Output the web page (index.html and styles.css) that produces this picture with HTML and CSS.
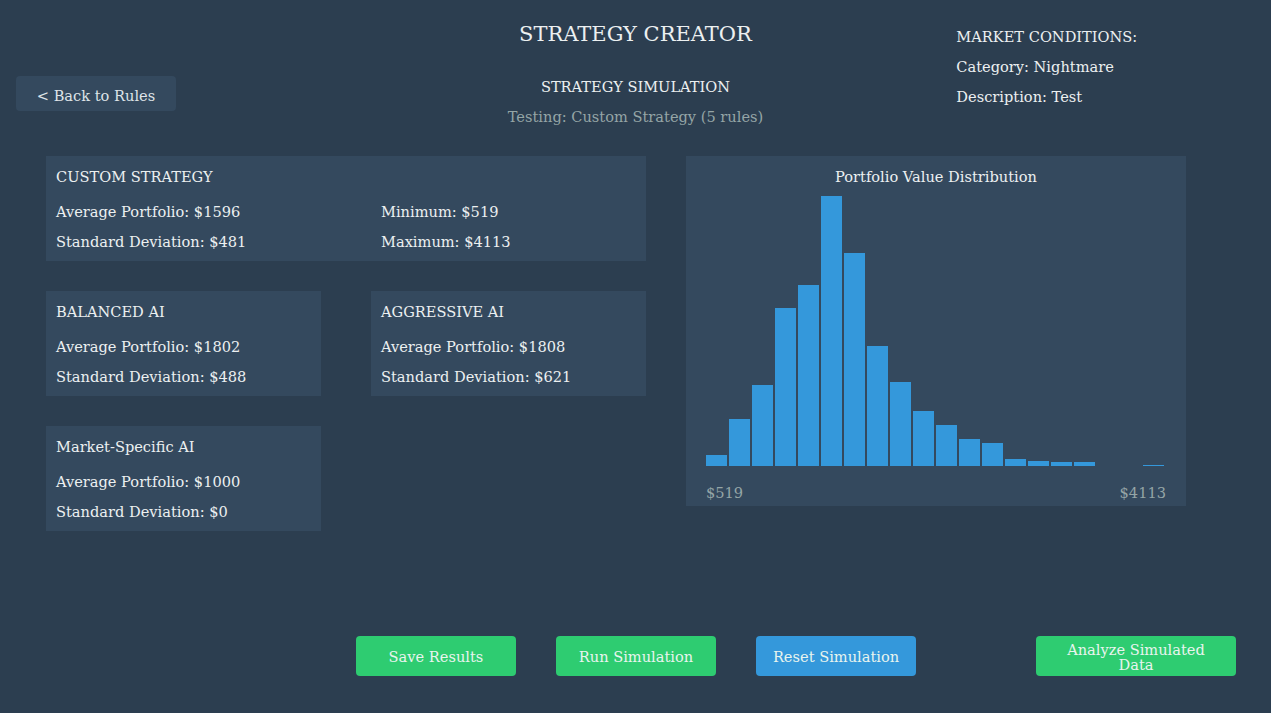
FILE: index.html
```html
<!DOCTYPE html>
<html>
<head>
    <meta name="viewport" content="width=device-width, initial-scale=1.0">
    <link rel="stylesheet" href="styles.css">
</head>

<body>
    <div class="screen">
        <div class="header">
            <div class="header-left">
                <button class="back-btn">&lt; Back to Rules</button>
            </div>
            <div class="header-center">
                <h1 class="title">STRATEGY CREATOR</h1>
                <p class="subtitle">STRATEGY SIMULATION</p>
                <p class="testing">Testing: Custom Strategy (5 rules)</p>
            </div>
            <div class="market">
                <p>MARKET CONDITIONS:</p>
                <p>Category: Nightmare</p>
                <p>Description: Test</p>
            </div>
        </div>

        <div class="results">
            <div class="strategies">
                <div class="panel panel-wide">
                    <div class="panel-title">CUSTOM STRATEGY</div>
                    <div class="stat">Average Portfolio: $1596</div>
                    <div class="stat">Minimum: $519</div>
                    <div class="stat">Standard Deviation: $481</div>
                    <div class="stat">Maximum: $4113</div>
                </div>

                <div class="panel-row">
                    <div class="panel">
                        <div class="panel-title">BALANCED AI</div>
                        <div class="stat">Average Portfolio: $1802</div>
                        <div class="stat">Standard Deviation: $488</div>
                    </div>
                    <div class="panel">
                        <div class="panel-title">AGGRESSIVE AI</div>
                        <div class="stat">Average Portfolio: $1808</div>
                        <div class="stat">Standard Deviation: $621</div>
                    </div>
                </div>

                <div class="panel-row">
                    <div class="panel">
                        <div class="panel-title">Market-Specific AI</div>
                        <div class="stat">Average Portfolio: $1000</div>
                        <div class="stat">Standard Deviation: $0</div>
                    </div>
                </div>
            </div>

            <div class="panel chart">
                <div class="chart-title">Portfolio Value Distribution</div>
                <div class="bars">
                    <div class="bar" style="height: 11px"></div>
                    <div class="bar" style="height: 47px"></div>
                    <div class="bar" style="height: 81px"></div>
                    <div class="bar" style="height: 158px"></div>
                    <div class="bar" style="height: 181px"></div>
                    <div class="bar" style="height: 270px"></div>
                    <div class="bar" style="height: 213px"></div>
                    <div class="bar" style="height: 120px"></div>
                    <div class="bar" style="height: 84px"></div>
                    <div class="bar" style="height: 55px"></div>
                    <div class="bar" style="height: 41px"></div>
                    <div class="bar" style="height: 27px"></div>
                    <div class="bar" style="height: 23px"></div>
                    <div class="bar" style="height: 7px"></div>
                    <div class="bar" style="height: 5px"></div>
                    <div class="bar" style="height: 4px"></div>
                    <div class="bar" style="height: 4px"></div>
                    <div class="bar" style="height: 0px"></div>
                    <div class="bar" style="height: 0px"></div>
                    <div class="bar" style="height: 1px"></div>
                </div>
                <div class="axis">
                    <span>$519</span>
                    <span>$4113</span>
                </div>
            </div>
        </div>

        <div class="actions">
            <button class="btn btn-green">Save Results</button>
            <button class="btn btn-green">Run Simulation</button>
            <button class="btn btn-blue">Reset Simulation</button>
            <button class="btn btn-green btn-analyze">Analyze Simulated Data</button>
        </div>
    </div>
</body>
</html>
```

FILE: styles.css
```css
* {
    margin: 0;
    padding: 0;
    box-sizing: border-box;
    font-family: 'DejaVu Serif', 'Liberation Serif', serif;
}

:root {
    --bg: #2c3e50;
    --panel-bg: #34495e;
    --text-primary: #ecf0f1;
    --text-muted: #95a5a6;
    --green: #2ecc71;
    --blue: #3498db;
}

body {
    background: var(--bg);
    color: var(--text-primary);
    font-size: 14.6px;
    line-height: 30px;
}

.screen {
    width: 1271px;
    height: 713px;
    overflow: hidden;
}

/* Header: back button, centred titles, market info */
.header {
    display: grid;
    grid-template-columns: 1fr 1fr 1fr;
    align-items: start;
    padding-top: 19px;
}

.header-left {
    padding: 57px 0 0 16px;
}

.back-btn {
    width: 160px;
    height: 35px;
    padding-top: 3px;
    background: var(--panel-bg);
    color: #dfe4e8;
    border: none;
    border-radius: 4px;
    font-size: 14.6px;
}

.header-center {
    text-align: center;
}

.title {
    font-size: 21px;
    font-weight: normal;
    line-height: 30px;
}

.subtitle {
    margin-top: 23px;
}

.testing {
    color: var(--text-muted);
}

.market {
    padding: 3px 0 0 109px;
}

/* Result panels */
.results {
    display: grid;
    grid-template-columns: 600px 500px;
    gap: 40px;
    padding-left: 46px;
    margin-top: 24px;
}

.strategies {
    display: flex;
    flex-direction: column;
    gap: 30px;
}

.panel {
    background: var(--panel-bg);
    padding: 6px 10px 4px;
    height: 105px;
}

.panel-title {
    margin-bottom: 5px;
}

.panel-wide {
    display: grid;
    grid-template-columns: 325px 1fr;
}

.panel-wide .panel-title {
    grid-column: 1 / -1;
}

.panel-row {
    display: grid;
    grid-template-columns: 275px 275px;
    gap: 50px;
}

/* Histogram */
.chart {
    height: 350px;
    padding: 6px 20px 0;
}

.chart-title {
    text-align: center;
}

.bars {
    display: flex;
    align-items: flex-end;
    gap: 2px;
    height: 270px;
    margin-top: 4px;
}

.bar {
    width: 21px;
    background: var(--blue);
}

.axis {
    display: flex;
    justify-content: space-between;
    color: var(--text-muted);
    line-height: 20px;
    margin-top: 17px;
}

/* Bottom action buttons */
.actions {
    display: flex;
    gap: 40px;
    padding-left: 356px;
    margin-top: 105px;
}

.btn {
    width: 160px;
    height: 40px;
    padding-top: 1px;
    border: none;
    border-radius: 4px;
    color: #e8f4ee;
    font-size: 14.6px;
    line-height: 15px;
}

.btn-green { background: var(--green); }
.btn-blue { background: var(--blue); }

.btn-analyze {
    width: 200px;
    margin-left: 80px;
    padding: 1px 20px 0;
}
```
